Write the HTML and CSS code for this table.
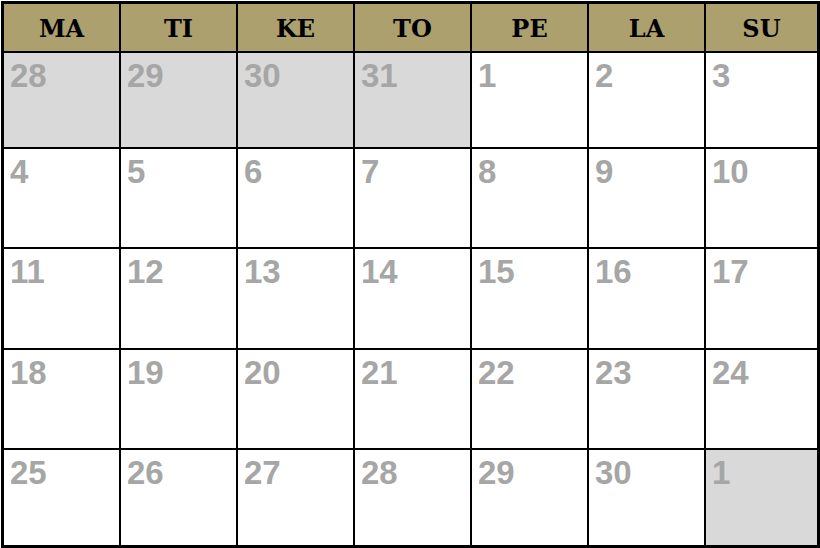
FILE: index.html
```html
<!DOCTYPE html>
<html>
<head>
<meta charset="utf-8">
<link rel="stylesheet" href="styles.css">
</head>
<body>
<div class="cal">
  <div class="hd">MA</div><div class="hd">TI</div><div class="hd">KE</div><div class="hd">TO</div><div class="hd">PE</div><div class="hd">LA</div><div class="hd">SU</div>
  <div class="d out">28</div><div class="d out">29</div><div class="d out">30</div><div class="d out">31</div><div class="d">1</div><div class="d">2</div><div class="d">3</div>
  <div class="d">4</div><div class="d">5</div><div class="d">6</div><div class="d">7</div><div class="d">8</div><div class="d">9</div><div class="d">10</div>
  <div class="d">11</div><div class="d">12</div><div class="d">13</div><div class="d">14</div><div class="d">15</div><div class="d">16</div><div class="d">17</div>
  <div class="d">18</div><div class="d">19</div><div class="d">20</div><div class="d">21</div><div class="d">22</div><div class="d">23</div><div class="d">24</div>
  <div class="d">25</div><div class="d">26</div><div class="d">27</div><div class="d">28</div><div class="d">29</div><div class="d">30</div><div class="d out">1</div>
</div>
</body>
</html>
```

FILE: styles.css
```css
html, body {
  margin: 0;
  padding: 0;
  background: #ffffff;
}
body {
  padding: 1px 0 0 1px;
}
.cal {
  width: 813px;
  display: grid;
  grid-template-columns: repeat(6, 115px) 111px;
  grid-template-rows: 47px 94px 98px 99px 98px 95px;
  gap: 2px;
  background: #000;
  border: 3px solid #000;
}
.hd {
  background: #aca06e;
  display: flex;
  align-items: center;
  justify-content: center;
  font-family: "DejaVu Serif", serif;
  font-weight: bold;
  font-size: 24px;
  color: #000;
  padding-top: 2px;
}
.d {
  background: #fff;
  font-family: "Liberation Sans", Arial, sans-serif;
  font-weight: bold;
  font-size: 33px;
  color: #a6a6a6;
  padding: 4px 0 0 6px;
}
.d.out {
  background: #d9d9d9;
}
```
